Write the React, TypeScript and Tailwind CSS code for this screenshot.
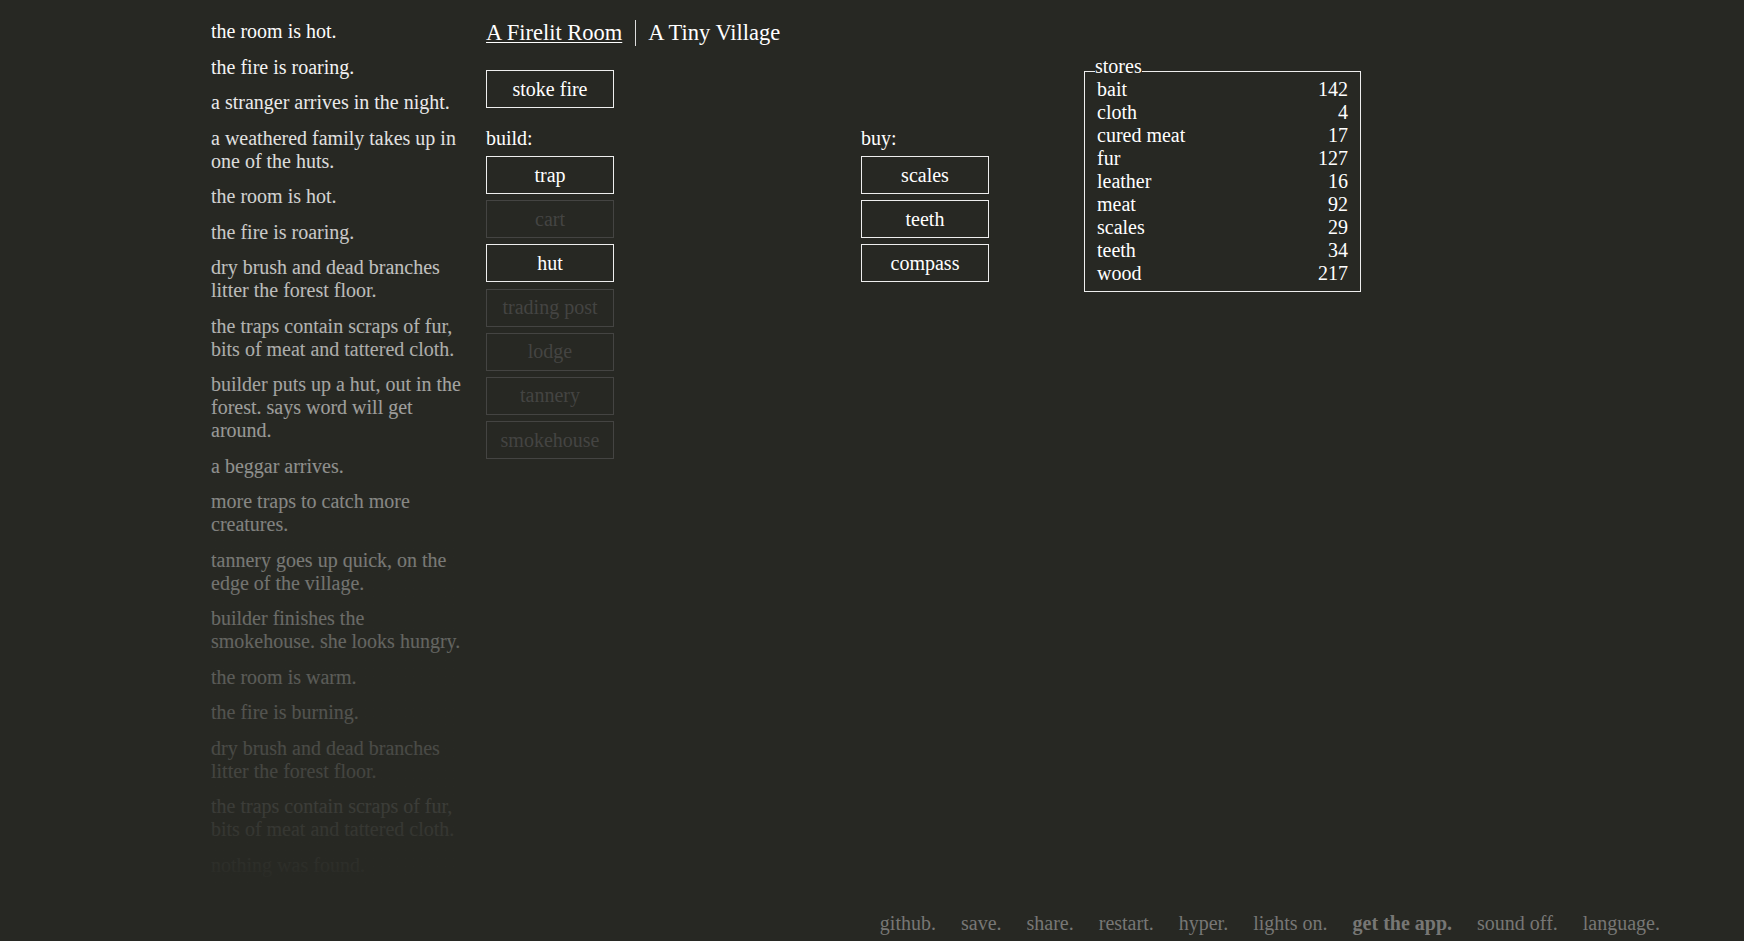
import React, { FC } from 'react'

const log: string[] = [
  'the room is hot.',
  'the fire is roaring.',
  'a stranger arrives in the night.',
  'a weathered family takes up in one of the huts.',
  'the room is hot.',
  'the fire is roaring.',
  'dry brush and dead branches litter the forest floor.',
  'the traps contain scraps of fur, bits of meat and tattered cloth.',
  'builder puts up a hut, out in the forest. says word will get around.',
  'a beggar arrives.',
  'more traps to catch more creatures.',
  'tannery goes up quick, on the edge of the village.',
  'builder finishes the smokehouse. she looks hungry.',
  'the room is warm.',
  'the fire is burning.',
  'dry brush and dead branches litter the forest floor.',
  'the traps contain scraps of fur, bits of meat and tattered cloth.',
  'nothing was found.',
]

const builds = [
  { name: 'trap', on: true },
  { name: 'cart', on: false },
  { name: 'hut', on: true },
  { name: 'trading post', on: false },
  { name: 'lodge', on: false },
  { name: 'tannery', on: false },
  { name: 'smokehouse', on: false },
]

const buys = ['scales', 'teeth', 'compass']

const stores: [string, number][] = [
  ['bait', 142],
  ['cloth', 4],
  ['cured meat', 17],
  ['fur', 127],
  ['leather', 16],
  ['meat', 92],
  ['scales', 29],
  ['teeth', 34],
  ['wood', 217],
]

const menu = ['github.', 'save.', 'share.', 'restart.', 'hyper.', 'lights on.', 'get the app.', 'sound off.', 'language.']

interface ButtonProps {
  label: string
  on?: boolean
}

const Button: FC<ButtonProps> = ({ label, on = true }) => {
  return (
    <div
      className={`w-[128px] h-[38px] mb-[6.2px] flex items-center justify-center border leading-[23px] select-none
        ${on ? 'border-[#eeeeee] text-white cursor-pointer' : 'border-[#444442] text-[#444442]'}`}
    >
      {label}
    </div>
  )
}

const App: FC = () => {
  return (
    <div
      className="h-screen w-full flex flex-col bg-[#272823] text-white text-[20px] overflow-hidden"
      style={{ fontFamily: '"Liberation Serif", "Times New Roman", serif' }}
    >
      <div className="flex-1 flex pt-[19px] pl-[211px]">
        {/* notifications */}
        <div className="relative w-[250px] h-[870px] pt-[1px] overflow-hidden shrink-0">
          {log.map((line, i) => (
            <div key={i} className="leading-[23px] mb-[12.5px]">{line}</div>
          ))}
          <div className="absolute inset-0 bg-gradient-to-b from-[#272823]/0 to-[#272823]"></div>
        </div>

        <div className="ml-[25px] flex flex-col">
          <div className="flex text-[22.5px] leading-[26px] mt-[0.5px]">
            <span className="pr-[12.5px] underline decoration-1 underline-offset-[2px] cursor-pointer">A Firelit Room</span>
            <span className="pl-[12.5px] border-l border-[#dddddd] cursor-pointer">A Tiny Village</span>
          </div>

          <div className="flex mt-[24.5px]">
            <div className="w-[375px]">
              <Button label="stoke fire" />
              <div className="mt-[19px] leading-[23px]">build:</div>
              <div className="mt-[6px]">
                {builds.map(b => (
                  <Button key={b.name} label={b.name} on={b.on} />
                ))}
              </div>
            </div>

            <div className="w-[223px] pt-[57px]">
              <div className="leading-[23px]">buy:</div>
              <div className="mt-[6px]">
                {buys.map(b => (
                  <Button key={b} label={b} />
                ))}
              </div>
            </div>

            <div className="pt-[1px]">
              <div className="relative w-[277px] border border-[#eeeeee] px-[12px] py-[6px]">
                <span className="absolute left-[10px] top-[-17px] leading-[23px] bg-[#272823]">stores</span>
                {stores.map(([name, n]) => (
                  <div key={name} className="flex justify-between leading-[23px]">
                    <span>{name}</span>
                    <span>{n}</span>
                  </div>
                ))}
              </div>
            </div>
          </div>
        </div>
      </div>

      <div className="flex justify-end gap-[25px] pr-[84px] pb-[6px] leading-[23px] text-[#777775]">
        {menu.map(m => (
          <span key={m} className={`cursor-pointer ${m === 'get the app.' ? 'font-bold' : ''}`}>{m}</span>
        ))}
      </div>
    </div>
  )
}

export default App
